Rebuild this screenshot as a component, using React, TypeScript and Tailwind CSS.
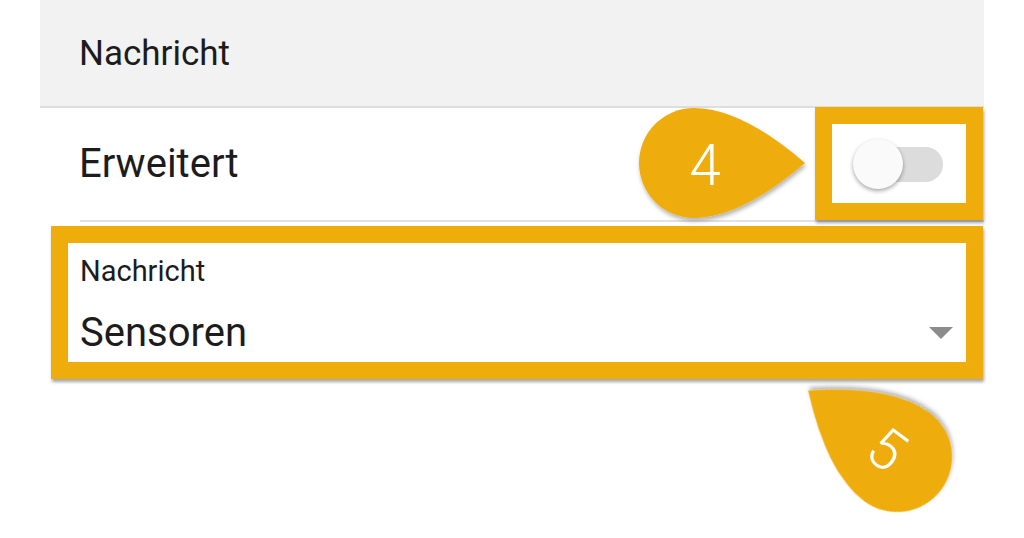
import React from "react"

const ORANGE = "#efad0c"

// teardrop pointing right, circle centered at 0,0
const DROP = "M111,0 Q47,-55 0,-55 A55,55 0 0 0 0,55 Q47,55 111,0 Z"

function Switch() {
  return (
    <div className="relative w-[90px] h-[50px]">
      <div className="absolute right-0 top-[8px] w-[84px] h-[35px] rounded-full bg-[#dcdcdc]" />
      <div className="absolute left-0 top-0 w-[50px] h-[50px] rounded-full bg-[#fafafa] shadow-[0_2px_4px_rgba(0,0,0,0.35)]" />
    </div>
  )
}

function Callouts() {
  return (
    <svg className="absolute left-0 top-0 pointer-events-none" width={1024} height={538} viewBox="0 0 1024 538">
      <defs>
        <filter id="shadow" x="-20%" y="-20%" width="140%" height="140%">
          <feDropShadow dx="1" dy="3" stdDeviation="2" floodColor="#000" floodOpacity="0.3" />
        </filter>
      </defs>
      {/* 4 */}
      <g transform="translate(694,163)" filter="url(#shadow)">
        <path d={DROP} fill={ORANGE} />
      </g>
      <text x={705} y={185} textAnchor="middle" fontSize={57} fontWeight={300} fill="#fff" fontFamily="Roboto, sans-serif">
        4
      </text>
      {/* 5 */}
      <g transform="translate(897,457) rotate(216.8)" filter="url(#shadow)">
        <path d={DROP} fill={ORANGE} />
      </g>
      <g transform="translate(887,449) rotate(36.8)">
        <text x={0} y={20} textAnchor="middle" fontSize={57} fontWeight={300} fill="#fff" fontFamily="Roboto, sans-serif">
          5
        </text>
      </g>
    </svg>
  )
}

export default function App() {
  return (
    <div className="relative w-[1024px] h-[538px] bg-white overflow-hidden font-['Roboto',sans-serif] text-[#1c1c1c]">
      <div className="ml-[40px] w-[944px]">
        {/* Header */}
        <div className="h-[108px] bg-[#f2f2f2] border-b-2 border-[#dedede] flex items-center pl-[39px]">
          <span className="text-[35px] leading-none">Nachricht</span>
        </div>

        {/* Erweitert row */}
        <div className="flex flex-col">
          <div className="h-[112px] flex items-center justify-between pl-[39px] pr-[41px]">
            <span className="text-[40px] leading-none">Erweitert</span>
            <Switch />
          </div>
          <div className="ml-[40px] h-[2px] bg-[#e2e2e2]" />
        </div>

        {/* Select field, framed */}
        <div className="mt-[4px] ml-[11px] w-[932px] border-[17px] border-[#efad0c] shadow-[1px_3px_3px_rgba(0,0,0,0.35)] bg-white">
          <div className="pl-[12px] pr-[13px] pt-[14px] pb-[9px]">
            <div className="text-[29px] leading-none">Nachricht</div>
            <div className="mt-[27px] flex items-center justify-between">
              <span className="text-[40px] leading-none">Sensoren</span>
              <div className="w-0 h-0 border-l-[12px] border-r-[12px] border-t-[12px] border-l-transparent border-r-transparent border-t-[#8c8c8c]" />
            </div>
          </div>
        </div>
      </div>

      {/* frame around switch */}
      <div className="absolute left-[815px] top-[107px] w-[168px] h-[113px] border-[17px] border-[#efad0c] shadow-[1px_3px_3px_rgba(0,0,0,0.35)]" />

      <Callouts />
    </div>
  )
}
